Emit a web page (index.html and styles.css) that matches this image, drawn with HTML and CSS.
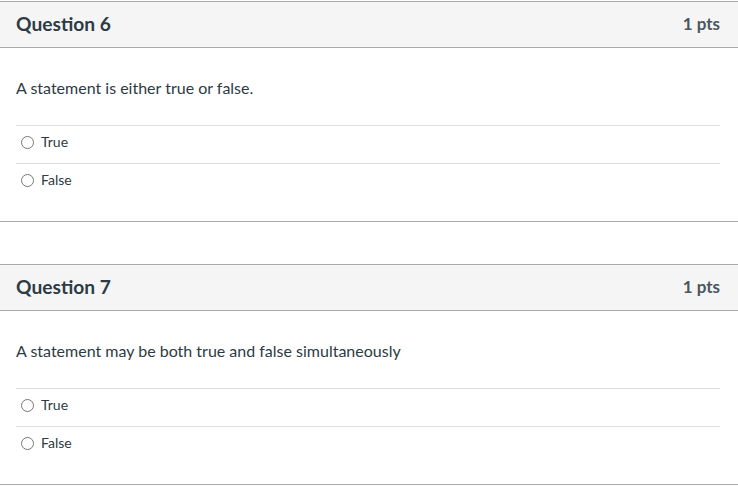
FILE: index.html
```html
<!DOCTYPE html>
<html>
<head>
<meta charset="utf-8">
<link rel="stylesheet" href="styles.css">
</head>
<body>
<div class="quiz">
  <section class="question">
    <header class="q-header">
      <h2 class="q-title">Question 6</h2>
      <span class="q-pts">1 pts</span>
    </header>
    <div class="q-body">
      <p class="q-text">A statement is either true or false.</p>
      <div class="answers">
        <label class="answer"><span class="radio"></span><span class="answer-label">True</span></label>
        <label class="answer"><span class="radio"></span><span class="answer-label">False</span></label>
      </div>
    </div>
  </section>
  <section class="question">
    <header class="q-header">
      <h2 class="q-title">Question 7</h2>
      <span class="q-pts">1 pts</span>
    </header>
    <div class="q-body">
      <p class="q-text">A statement may be both true and false simultaneously</p>
      <div class="answers">
        <label class="answer"><span class="radio"></span><span class="answer-label">True</span></label>
        <label class="answer"><span class="radio"></span><span class="answer-label">False</span></label>
      </div>
    </div>
  </section>
</div>
</body>
</html>
```
FILE: styles.css
```css
html, body {
  margin: 0;
  padding: 0;
  background: #ffffff;
}
body {
  font-family: Lato, "Liberation Sans", sans-serif;
  color: #2d3b45;
}
.quiz {
  padding-top: 1px;
  display: flex;
  flex-direction: column;
  gap: 42px;
}
.question {
  border-top: 1px solid #aaaaaa;
  border-bottom: 1px solid #aaaaaa;
}
.q-header {
  background: #f5f5f5;
  height: 45px;
  box-sizing: border-box;
  border-bottom: 1px solid #aaaaaa;
  display: flex;
  align-items: center;
  justify-content: space-between;
  padding: 0 18px 3px 16px;
  height: 46px;
}
.q-title {
  margin: 0;
  font-size: 19.2px;
  font-weight: 700;
  color: #2d3b45;
}
.q-pts {
  font-size: 17px;
  font-weight: 700;
  color: #4a5660;
}
.q-body {
  padding: 28px 18px 20px 16px;
}
.q-text {
  margin: 0 0 25px;
  font-size: 16px;
  line-height: 24px;
}
.answer {
  display: flex;
  align-items: center;
  border-top: 1px solid #dddddd;
  padding: 6px 0 11px 5px;
  line-height: 20px;
  font-size: 14px;
}
.radio {
  width: 11px;
  height: 11px;
  border: 1px solid #777777;
  border-radius: 50%;
  margin-right: 7px;
}
.answer-label {
  color: #2d3b45;
}
```
